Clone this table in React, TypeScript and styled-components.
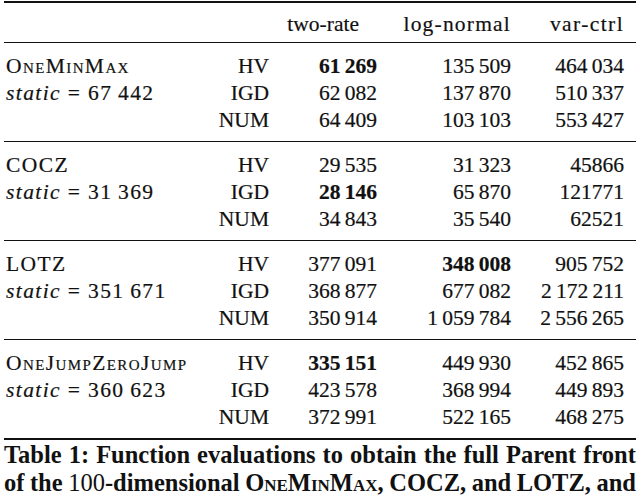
import React from 'react'
import styled, { createGlobalStyle } from 'styled-components'

const GlobalStyle = createGlobalStyle`
  html, body {
    margin: 0;
    padding: 0;
    background: #fff;
    overflow: hidden;
  }
  body {
    font-family: "Liberation Serif", "Times New Roman", serif;
    color: #111;
  }
`

const T = '\u2009'

type Row = { metric: string; values: string[]; best?: number }
type Group = { name: string; smallCaps?: boolean; stat: string; rows: Row[] }

const groups: Group[] = [
  {
    name: 'OneMinMax',
    smallCaps: true,
    stat: `67${T}442`,
    rows: [
      { metric: 'HV', values: [`61${T}269`, `135${T}509`, `464${T}034`], best: 0 },
      { metric: 'IGD', values: [`62${T}082`, `137${T}870`, `510${T}337`] },
      { metric: 'NUM', values: [`64${T}409`, `103${T}103`, `553${T}427`] },
    ],
  },
  {
    name: 'COCZ',
    stat: `31${T}369`,
    rows: [
      { metric: 'HV', values: [`29${T}535`, `31${T}323`, '45866'] },
      { metric: 'IGD', values: [`28${T}146`, `65${T}870`, '121771'], best: 0 },
      { metric: 'NUM', values: [`34${T}843`, `35${T}540`, '62521'] },
    ],
  },
  {
    name: 'LOTZ',
    stat: `351${T}671`,
    rows: [
      { metric: 'HV', values: [`377${T}091`, `348${T}008`, `905${T}752`], best: 1 },
      { metric: 'IGD', values: [`368${T}877`, `677${T}082`, `2${T}172${T}211`] },
      { metric: 'NUM', values: [`350${T}914`, `1${T}059${T}784`, `2${T}556${T}265`] },
    ],
  },
  {
    name: 'OneJumpZeroJump',
    smallCaps: true,
    stat: `360${T}623`,
    rows: [
      { metric: 'HV', values: [`335${T}151`, `449${T}930`, `452${T}865`], best: 0 },
      { metric: 'IGD', values: [`423${T}578`, `368${T}994`, `449${T}893`] },
      { metric: 'NUM', values: [`372${T}991`, `522${T}165`, `468${T}275`] },
    ],
  },
]

const Page = styled.div`
  padding: 1px 4px 0;
`

const Table = styled.div`
  border-top: 2px solid #111;
  font-size: 21.5px;
  -webkit-text-stroke: 0.2px #111;
`

const Columns = styled.div`
  display: grid;
  grid-template-columns: 183px 80px 108px 134px 113px;
  padding: 0 14px 0 2px;
  line-height: 27px;
`

const HeaderRow = styled(Columns)`
  padding-top: 8px;
  padding-bottom: 4px;
  border-bottom: 1px solid #111;
`

const GroupBlock = styled.div<{ $last?: boolean }>`
  padding: 10px 0 7px;
  border-bottom: ${(p) => (p.$last ? '2px' : '1px')} solid #111;
`

const Head = styled.div<{ $pad?: number; $spread?: number }>`
  text-align: right;
  padding-right: ${(p) => p.$pad ?? 0}px;
  letter-spacing: ${(p) => p.$spread ?? 0}px;
  white-space: nowrap;
`

const Label = styled.div<{ $caps?: boolean }>`
  white-space: nowrap;
  letter-spacing: 1.4px;
  font-variant: ${(p) => (p.$caps ? 'small-caps' : 'normal')};
`

const Metric = styled.div`
  text-align: right;
  margin-left: -4px;
`

const Num = styled.div<{ $bold?: boolean }>`
  text-align: right;
  white-space: nowrap;
  font-weight: ${(p) => (p.$bold ? 700 : 400)};
`

const Caption = styled.div`
  font-size: 24.5px;
  font-weight: 700;
  line-height: 28px;
  padding-top: 1px;
`

const CaptionLine = styled.div`
  white-space: nowrap;
  display: flex;
  justify-content: space-between;
`

const Plain = styled.span`
  font-weight: 400;
`

const Caps = styled.span`
  font-variant: small-caps;
`

function labelFor(g: Group, i: number) {
  if (i === 0) return <Label $caps={g.smallCaps}>{g.name}</Label>
  if (i === 1)
    return (
      <Label>
        <i>static</i> = {g.stat}
      </Label>
    )
  return <Label />
}

const firstLine = 'Table 1: Function evaluations to obtain the full Parent front'

export default function App() {
  return (
    <Page>
      <GlobalStyle />
      <Table>
        <HeaderRow>
          <div />
          <div />
          <Head $pad={18}>two-rate</Head>
          <Head $spread={1.2}>log-normal</Head>
          <Head $spread={1.4}>var-ctrl</Head>
        </HeaderRow>
        {groups.map((g, gi) => (
          <GroupBlock key={g.name} $last={gi === groups.length - 1}>
            {g.rows.map((r, i) => (
              <Columns key={r.metric}>
                {labelFor(g, i)}
                <Metric>{r.metric}</Metric>
                {r.values.map((v, vi) => (
                  <Num key={vi} $bold={r.best === vi}>
                    {v}
                  </Num>
                ))}
              </Columns>
            ))}
          </GroupBlock>
        ))}
      </Table>
      <Caption>
        <CaptionLine>
          {firstLine.split(' ').map((w, i) => (
            <span key={i}>{w}</span>
          ))}
        </CaptionLine>
        <CaptionLine>
          <span>of</span>
          <span>the</span>
          <span>
            <Plain>100</Plain>-dimensional
          </span>
          <Caps>OneMinMax,</Caps>
          <span>COCZ,</span>
          <span>and</span>
          <span>LOTZ,</span>
          <span>and</span>
        </CaptionLine>
      </Caption>
    </Page>
  )
}
